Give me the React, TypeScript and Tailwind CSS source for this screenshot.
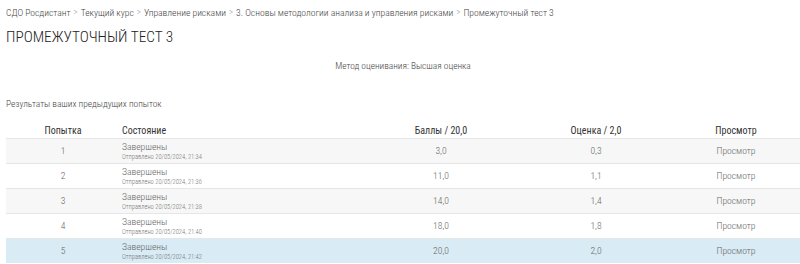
import React from "react";

const rows = [
  { n: 1, t: "21:34", s: "3,0", g: "0,3", bg: "bg-[#f7f7f7]" },
  { n: 2, t: "21:36", s: "11,0", g: "1,1", bg: "bg-white" },
  { n: 3, t: "21:38", s: "14,0", g: "1,4", bg: "bg-[#f7f7f7]" },
  { n: 4, t: "21:40", s: "18,0", g: "1,8", bg: "bg-white" },
  { n: 5, t: "21:42", s: "20,0", g: "2,0", bg: "bg-[#d9ebf5]" },
];

const crumbs = [
  "СДО Росдистант",
  "Текущий курс",
  "Управление рисками",
  "3. Основы методологии анализа и управления рисками",
  "Промежуточный тест 3",
];

const cols = "grid grid-cols-[114px_242px_158px_152px_128px]";

export default function App() {
  return (
    <div
      className="w-[800px] h-[264px] overflow-hidden bg-white text-[#666] font-light"
      style={{ fontFamily: '"Roboto Condensed", "Liberation Sans Narrow", Roboto, sans-serif' }}
    >
      <div className="flex items-center h-[26px] pl-[6px] text-[9.6px] text-[#444]">
        {crumbs.map((c, i) => (
          <React.Fragment key={i}>
            {i > 0 && <span className="mx-[3px] text-[#999] text-[9px]">&gt;</span>}
            <span>{c}</span>
          </React.Fragment>
        ))}
      </div>
      <div className="pl-[6px] h-[23px] flex items-center text-[15.3px] text-[#222]">
        ПРОМЕЖУТОЧНЫЙ ТЕСТ 3
      </div>
      <div className="h-[35px] flex items-center justify-center text-[9.4px] text-[#444] pl-[6px]">
        Метод оценивания: Высшая оценка
      </div>
      <div className="h-[38px] flex items-center pl-[6px] pt-[2px] text-[9.4px] text-[#444]">
        Результаты ваших предыдущих попыток
      </div>
      <div className="ml-[6px] w-[794px]">
        <div className={`${cols} h-[16px] items-center text-[10px] text-[#333] font-normal`}>
          <div className="text-center">Попытка</div>
          <div className="pl-[2px]">Состояние</div>
          <div className="text-center">Баллы / 20,0</div>
          <div className="text-center">Оценка / 2,0</div>
          <div className="text-center">Просмотр</div>
        </div>
        {rows.map((r) => (
          <div
            key={r.n}
            className={`${cols} h-[25px] items-center border-t border-[#e6e6e6] text-[9.6px] text-[#666] ${r.bg}`}
          >
            <div className="text-center">{r.n}</div>
            <div className="pl-[2px] flex flex-col leading-none">
              <span className="text-[9.6px]">Завершены</span>
              <span className="text-[6.5px] mt-[2px] text-[#777]">Отправлено 20/05/2024, {r.t}</span>
            </div>
            <div className="text-center">{r.s}</div>
            <div className="text-center">{r.g}</div>
            <div className="text-center">Просмотр</div>
          </div>
        ))}
      </div>
    </div>
  );
}
